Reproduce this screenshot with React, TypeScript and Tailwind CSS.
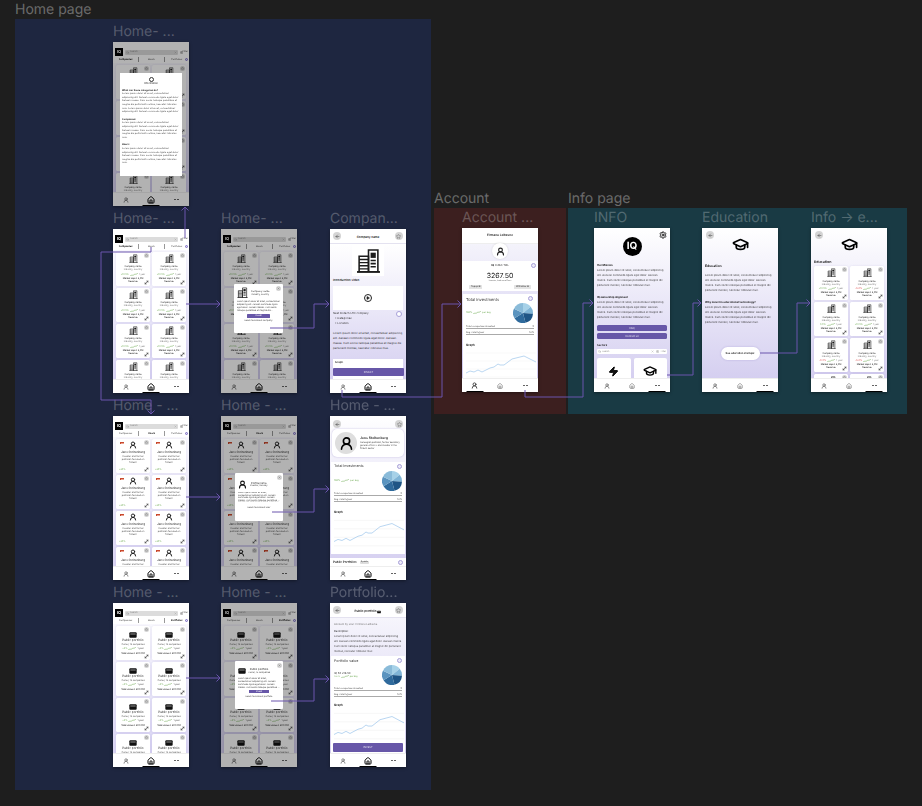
import React from "react";
import { ArrowLeft, GraduationCap, Home, Search, Settings, SlidersHorizontal, Star, UserRound, X, Zap, Play, MoveDiagonal } from "lucide-react";

const lorem = "Lorem ipsum dolor sit amet, consectetuer adipiscing elit. Aenean commodo ligula eget dolor. Aenean massa. Cum sociis natoque penatibus et magnis dis parturient montes, nascetur ridiculus mus.";

function Building({ size }: { size: number }) {
  return (
    <svg width={size} height={size} viewBox="0 0 24 24" fill="none" stroke="#1c1c1c" strokeWidth="1.5" className="shrink-0">
      <path d="M1 23H23" strokeWidth="1.8" />
      <path d="M3 23V8H12V23" />
      <path d="M12 23V2H21V23" />
      <path d="M3 11H12M3 14H12M3 17H12M3 20H12" strokeWidth="1.3" />
      <path d="M14 4.5H19V9.5H14Z" fill="#1c1c1c" stroke="none" />
      <path d="M14 12H19M14 15H19M14 18H19" strokeWidth="1.6" />
    </svg>
  );
}

function WalletIcon({ size }: { size: number }) {
  return (
    <svg width={size} height={size} viewBox="0 0 24 24" className="shrink-0">
      <rect x="1" y="4" width="22" height="16" rx="3" fill="#111" />
      <path d="M4 9H20" stroke="#fff" strokeWidth="1.6" />
    </svg>
  );
}

function Nav({ active }: { active: "user" | "home" | "more" }) {
  const bar = <span className="absolute bottom-0 left-1/2 -translate-x-1/2 w-[17px] h-[1px] bg-black" />;
  return (
    <div className="shrink-0 h-[14px] bg-white grid grid-cols-3 items-center border-t border-[#eeeeee] text-black">
      <div className="relative h-full flex items-center justify-center">
        <UserRound size={active === "user" ? 7 : 6} strokeWidth={active === "user" ? 3 : 2} className="text-[#333]" />
        {active === "user" && bar}
      </div>
      <div className="relative h-full flex items-center justify-center">
        <Home size={active === "home" ? 8 : 6} strokeWidth={active === "home" ? 3 : 2} className={active === "home" ? "text-black" : "text-[#555]"} />
        {active === "home" && bar}
      </div>
      <div className="relative h-full flex items-center justify-center">
        <span className="flex gap-[0.5px]">
          <i className="w-[1px] h-[1px] rounded-full bg-[#333]" />
          <i className="w-[1px] h-[1px] rounded-full bg-[#333]" />
          <i className="w-[1px] h-[1px] rounded-full bg-[#333]" />
          <i className="w-[1px] h-[1px] rounded-full bg-[#333]" />
        </span>
        {active === "more" && bar}
      </div>
    </div>
  );
}

function Round({ children, size = "w-[5px] h-[5px]" }: { children?: React.ReactNode; size?: string }) {
  return <span className={`${size} rounded-full bg-[#d4d4d4] flex items-center justify-center shrink-0`}>{children}</span>;
}

function StarDot() {
  return (
    <span className="absolute right-[1px] top-[1px]">
      <Round><Star size={3} className="text-[#555]" /></Round>
    </span>
  );
}

function Spark() {
  return (
    <svg width="8" height="3" viewBox="0 0 8 3">
      <polyline points="0,3 2,2 3,2.4 5,1 6,1.4 8,0" fill="none" stroke="#6aa84f" strokeWidth="0.5" />
    </svg>
  );
}

function Corner() {
  return (
    <span className="absolute right-[1px] bottom-[1px]">
      <MoveDiagonal size={5} strokeWidth={2.5} className="text-[#222]" />
    </span>
  );
}

function CompanyCard({ change = "+10.5%", red = false }: { change?: string; red?: boolean }) {
  return (
    <div className="relative h-[34px] shrink-0 bg-white rounded-[1.5px] shadow-[0_0_2px_rgba(90,70,170,0.15)] flex flex-col items-center pt-[2px] text-[2.3px] leading-[3px] text-[#444]">
      <StarDot />
      <Building size={9} />
      <span className="mt-[2.5px] text-[#222]">Company name</span>
      <span className="text-[#777]">Industry, country</span>
      <span className="flex items-center gap-[1px] mt-[1.5px]">
        <span className={red ? "text-[#d44]" : "text-[#6aa84f]"}>{change}</span>
        <Spark />
        <span className="text-[#888]">1 year</span>
      </span>
      <span className="mt-[1px] text-black text-center">Market cap € 2,3M</span>
      <span className="text-black">Revenue</span>
      <Corner />
    </div>
  );
}

function UserCard() {
  return (
    <div className="relative h-[34px] shrink-0 bg-white rounded-[1.5px] shadow-[0_0_2px_rgba(90,70,170,0.15)] flex flex-col items-center pt-[2px] text-[2.3px] leading-[3px] text-[#555]">
      <StarDot />
      <span className="absolute left-[4px] top-[3px] w-[4px] h-[2px] border-l border-t border-[#c8492e] bg-[#e9a08f]" />
      <UserRound size={8} strokeWidth={3} className="text-[#222]" />
      <span className="mt-[2px] text-[3px] text-[#222]">Jens Stoltenberg</span>
      <span className="mt-[1px] w-[26px] text-center">Investor and former politician focused on fintech</span>
      <span className="absolute left-[3px] bottom-[2px] text-[#6aa84f]">+20%</span>
      <Corner />
    </div>
  );
}

function PortfolioCard() {
  return (
    <div className="relative h-[34px] shrink-0 bg-white rounded-[1.5px] shadow-[0_0_2px_rgba(90,70,170,0.15)] flex flex-col items-center pt-[5px] text-[2.3px] leading-[3px] text-[#555]">
      <StarDot />
      <WalletIcon size={8} />
      <span className="text-[3px] text-[#222]">Public portfolio</span>
      <span className="mt-[1px]">Owner, 12 companies</span>
      <span className="flex items-center gap-[1px] mt-[1.5px]">
        <span className="text-[#6aa84f]">+5%</span>
        <Spark />
        <span>1 year</span>
      </span>
      <span className="mt-[2px] text-black">Total value € 230.000</span>
      <Corner />
    </div>
  );
}

function ListScreen({ tab, kind }: { tab: 0 | 1 | 2; kind: "company" | "user" | "portfolio" }) {
  const Card = kind === "company" ? CompanyCard : kind === "user" ? UserCard : PortfolioCard;
  const tabs = ["Companies", "Users", "Portfolios"];
  return (
    <>
      <div className="flex-1 min-h-0 overflow-hidden flex flex-col bg-gradient-to-b from-white to-[#d9d4f3]">
        <div className="bg-white shrink-0 pb-[1px]">
          <div className="flex items-center h-[8px] mt-[6px] pl-[2px] pr-[1px] gap-[2px]">
            <div className="w-[8px] h-[8px] bg-black text-white text-[4px] font-bold flex items-center justify-center">IQ</div>
            <div className="flex-1 h-[5px] rounded-[1px] bg-[#dcdcdc] flex items-center justify-between px-[1px] text-[2.3px] text-[#888]">
              <span className="flex items-center gap-[1px]"><Search size={3} />Search</span>
              <X size={3} />
            </div>
            <span className="flex items-center text-[2.3px] text-[#555]"><SlidersHorizontal size={3} />Filter</span>
          </div>
          <div className="relative grid grid-cols-3 h-[5px] mt-[1px] text-[2.5px] leading-[5px] text-center text-[#333]">
            {tabs.map((t, i) => (
              <span key={t} className={`${i === tab ? "font-bold text-black" : ""} ${i > 0 ? "border-l border-[#999]" : ""}`}>{t}</span>
            ))}
            <span className="absolute right-[1px] top-[1px] w-[3px] h-[3px] rounded-full border-[0.5px] border-[#7c6cc4] bg-[#dcd8f2]" />
          </div>
        </div>
        <div className="grid grid-cols-2 gap-[2px] px-[3px] pt-[1.5px]">
          {Array.from({ length: 8 }).map((_, i) => <Card key={i} />)}
        </div>
      </div>
      <Nav active="home" />
    </>
  );
}

function CompanyModal() {
  return (
    <div className="absolute left-[13px] top-[55px] w-[49px] h-[49px] bg-white rounded-[1px] p-[3px] text-[2.2px] leading-[3px] text-[#444] flex flex-col">
      <span className="absolute right-[2px] top-[2px]"><Round><X size={3} /></Round></span>
      <div className="flex items-center gap-[3px]">
        <Building size={11} />
        <div className="text-center"><div className="text-[2.5px] text-[#222]">Company name</div><div>Industry, country</div></div>
      </div>
      <p className="mt-[2px] line-clamp-4">{lorem}</p>
      <div className="mt-[2px] mx-[10px] h-[4px] rounded-[0.5px] bg-[#6757a8] text-white text-center leading-[4px]">Invest</div>
      <div className="mt-[1px] text-center">Read more about company</div>
    </div>
  );
}

function UserModal() {
  return (
    <div className="absolute left-[14px] top-[57px] w-[48px] h-[48px] bg-white rounded-[1px] p-[3px] text-[2.2px] leading-[2.6px] text-[#444] flex flex-col">
      <span className="absolute right-[1px] top-[2px]"><Round><X size={3} /></Round></span>
      <div className="flex items-center gap-[3px] pt-[4px]">
        <UserRound size={9} strokeWidth={3} className="text-[#111] shrink-0" />
        <div className="text-center"><div className="text-[2.6px] text-[#222]">Profile name</div><div>Investor, Norway</div></div>
      </div>
      <p className="mt-[3px] line-clamp-4">{lorem}</p>
      <div className="mt-[5px] text-center">Read more about user</div>
    </div>
  );
}

function PortfolioModal() {
  return (
    <div className="absolute left-[14px] top-[58px] w-[48px] h-[48px] bg-white rounded-[1px] p-[3px] text-[2.2px] leading-[3px] text-[#444] flex flex-col">
      <span className="absolute right-[1px] top-[2px]"><Round><X size={3} /></Round></span>
      <div className="flex items-center gap-[2px] pt-[3px]">
        <WalletIcon size={8} />
        <div className="text-center"><div className="text-[2.6px] text-[#222]">Public portfolio</div><div>Owner, 12 companies</div></div>
      </div>
      <p className="mt-[2px] line-clamp-4">{lorem}</p>
      <div className="mt-[1px] mx-[11px] h-[3px] bg-[#6757a8] text-white text-center leading-[3px]">Invest</div>
      <div className="mt-[1.5px] text-center">Read more about portfolio</div>
    </div>
  );
}

function Dim() {
  return <div className="absolute inset-0 bg-black/30" />;
}

function Pie() {
  const data = [
    [0.14, "#a6d1e8"], [0.12, "#7fb4d6"], [0.2, "#1f5586"], [0.2, "#2f6a9c"], [0.16, "#5b94bf"], [0.18, "#8abbd9"],
  ] as const;
  let a = -Math.PI / 2;
  const paths = data.map(([v, c]) => {
    const b = a + v * Math.PI * 2;
    const d = `M10 10 L${10 + 10 * Math.cos(a)} ${10 + 10 * Math.sin(a)} A10 10 0 ${v > 0.5 ? 1 : 0} 1 ${10 + 10 * Math.cos(b)} ${10 + 10 * Math.sin(b)} Z`;
    a = b;
    return <path key={c} d={d} fill={c} />;
  });
  return <svg width="20" height="20" viewBox="0 0 20 20" className="shrink-0">{paths}</svg>;
}

function Graph({ h = 34 }: { h?: number }) {
  const pts = "0,26 4,24 8,25 12,23 16,25 20,23 24,21 28,20 32,17 34,18 38,18 42,15 46,12 50,11 54,10 58,9 62,11 66,13 70,15";
  return (
    <svg width="70" height={h} viewBox="0 0 70 34" preserveAspectRatio="none" className="block">
      {[6, 14, 22, 30].map((y) => <line key={y} x1="0" x2="70" y1={y} y2={y} stroke="#f0f0f0" strokeWidth="0.5" />)}
      <polyline points={pts} fill="none" stroke="#a9cdee" strokeWidth="0.8" />
    </svg>
  );
}

function StatRows() {
  return (
    <div className="text-[2.4px] leading-[3px] text-[#444]">
      <div className="flex justify-between border-b border-[#aaa] mb-[1.5px]"><span>Total companies invested</span><span>5</span></div>
      <div className="flex justify-between border-b border-[#aaa]"><span>Avg. return/year</span><span>12%</span></div>
    </div>
  );
}

function BackHeader({ title }: { title?: React.ReactNode }) {
  return (
    <div className="shrink-0 h-[15px] bg-white flex items-center justify-between px-[3px] border-b border-[#e4e2f0]">
      <Round size="w-[8px] h-[8px]"><ArrowLeft size={5} className="text-[#222]" /></Round>
      <span className="text-[3px] font-semibold text-[#111] flex items-center gap-[1px] mt-[3px]">{title}</span>
      <Round size="w-[8px] h-[8px]"><Star size={5} className="text-[#555]" /></Round>
    </div>
  );
}

function CompanyDetail() {
  return (
    <>
      <BackHeader title="Company name" />
      <div className="flex-1 min-h-0 relative bg-gradient-to-b from-white to-[#d5cff0] flex flex-col text-[2.8px] leading-[5px] text-[#333] px-[3px]">
        <div className="self-center w-[32px] h-[32px] bg-white flex items-center justify-center">
          <Building size={25} />
        </div>
        <div className="mt-[3px] text-[3px] leading-[3.4px] font-semibold text-[#222]">Introduction video</div>
        <div className="mt-[4px] h-[24px] bg-white flex items-center justify-center">
          <span className="w-[8px] h-[8px] rounded-full border border-[#222] flex items-center justify-center"><Play size={4} fill="#222" className="text-[#222]" /></span>
        </div>
        <div className="mt-[1px] relative">
          <div>Next Fintech LTD company</div>
          <div className="pl-[2px]">• Categories</div>
          <div className="pl-[2px]">• Location</div>
          <span className="absolute right-[1px] top-[0px] w-[6px] h-[6px] rounded-full bg-white border-[0.5px] border-[#a79fd8]" />
        </div>
        <p className="mt-[5px]">Lorem ipsum dolor sit amet, consectetuer adipiscing elit. Aenean commodo ligula eget dolor. Aenean massa. Cum sociis natoque penatibus et magnis dis parturient montes, nascetur ridiculus mus.</p>
        <div className="absolute left-[3px] right-[3px] bottom-0 h-[20px] bg-white px-[2px] pt-[1px] text-[2.8px] leading-[4px] font-semibold">Graph</div>
        <div className="absolute left-[3px] right-[2px] bottom-[3px] h-[8px] rounded-[1px] bg-[#6757a8] text-white/80 text-[2.6px] leading-[8px] text-center">INVEST</div>
      </div>
      <Nav active="home" />
    </>
  );
}

function AccountScreen() {
  return (
    <>
      <div className="shrink-0 h-[16px] bg-white flex items-center justify-center text-[3px] font-semibold text-[#222] border-b border-[#eee]">Firmanu Leibavne</div>
      <div className="flex-1 min-h-0 bg-gradient-to-b from-[#f4f3fb] to-[#cfc9ee] flex flex-col relative">
        <div className="absolute left-1/2 -translate-x-1/2 -top-[1px] w-[16px] h-[16px] rounded-full bg-white shadow-[0_0_2px_rgba(0,0,0,0.15)] flex items-center justify-center z-10">
          <UserRound size={9} strokeWidth={3} className="text-[#222]" />
        </div>
        <div className="relative mt-[17px] h-[30px] shrink-0 bg-white flex flex-col items-center text-[#333]">
          <div className="mt-[2px] text-[2.8px] leading-[4px]"><b>IQ</b> 0.863 TOL</div>
          <span className="absolute right-[2px] top-[2px] w-[5px] h-[5px] rounded-full border-[0.5px] border-[#a79fd8] bg-[#ecebf7]" />
          <div className="mt-[5px] text-[7px] leading-[8px] text-[#111]">3267.50</div>
          <div className="text-[2px] leading-[3px] text-[#555]">Investor, Leibavne Duns</div>
          <div className="mt-[2px] w-full px-[7px] flex justify-between text-[2.3px] leading-[4px]">
            <span className="px-[2px] bg-[#e4e4e4] rounded-[0.5px]">Topup ⊞</span>
            <span className="px-[2px] bg-[#e4e4e4] rounded-[0.5px]">Withdraw ⊟</span>
          </div>
        </div>
        <div className="mt-[3px] flex-1 min-h-0 bg-white mx-[1px] px-[3px] relative overflow-hidden">
          <div className="mt-[3px] text-[4px] leading-[6px] text-[#333]">Total investments</div>
          <span className="absolute right-[4px] top-[2px] w-[5px] h-[5px] rounded-full border-[0.5px] border-[#a79fd8] bg-[#ecebf7]" />
          <div className="flex items-center justify-between pr-[1px]">
            <span className="flex items-center gap-[1px] text-[2.4px] text-[#6aa84f]">100% <Spark /> per day</span>
            <Pie />
          </div>
          <div className="mt-[2px]"><StatRows /></div>
          <div className="mt-[8px] text-[3px] leading-[4px] font-semibold text-[#222]">Graph</div>
          <Graph h={34} />
        </div>
      </div>
      <Nav active="user" />
    </>
  );
}

function UserDetail() {
  return (
    <>
      <div className="flex-1 min-h-0 bg-gradient-to-b from-white to-[#d5cff0] flex flex-col relative">
        <div className="flex justify-between px-[3px] pt-[4px] h-[13px] shrink-0">
          <Round size="w-[8px] h-[8px]"><ArrowLeft size={5} className="text-[#222]" /></Round>
          <Round size="w-[8px] h-[8px]"><Star size={5} className="text-[#555]" /></Round>
        </div>
        <div className="mx-[2px] h-[28px] shrink-0 bg-white rounded-[5px] shadow-[0_0_2px_rgba(90,70,170,0.35)] flex items-center gap-[3px] px-[3px]">
          <span className="w-[22px] h-[22px] rounded-full bg-[#dedede] shrink-0 flex items-center justify-center"><UserRound size={15} strokeWidth={2.6} className="text-black" /></span>
          <div className="text-[2.2px] leading-[3.2px] text-[#444]">
            <div className="text-[3.4px] leading-[5px] font-semibold text-[#111]">Jens Stoltenberg</div>
            <div>Norwegian politician, former secretary general of NATO and investor in the fintech sector</div>
          </div>
        </div>
        <div className="mt-[5px] flex-1 min-h-0 bg-white px-[3px] mx-[1px] relative overflow-hidden">
          <div className="mt-[2px] text-[3.6px] leading-[5px] text-[#333]">Total investments</div>
          <span className="absolute right-[3px] top-[2px] w-[5px] h-[5px] rounded-full border-[0.5px] border-[#a79fd8] bg-[#ecebf7]" />
          <div className="mt-[2px] flex items-center justify-between">
            <span className="flex items-center gap-[1px] text-[2.4px] text-[#6aa84f]">100% <Spark /> per day</span>
            <Pie />
          </div>
          <div className="mt-[1px]"><StatRows /></div>
          <div className="mt-[8px] text-[3px] leading-[4px] font-semibold text-[#222]">Graph</div>
          <Graph h={36} />
        </div>
        <div className="shrink-0 mt-[4px] h-[8px] bg-white flex items-center justify-between px-[3px]">
          <span className="flex items-center gap-[3px] text-[3px] font-semibold text-[#222]">Public Portfolios <span className="px-[1px] bg-[#ddd] rounded-[1px] text-[2px] font-normal">2 public</span></span>
          <span className="w-[5px] h-[5px] rounded-full border-[0.5px] border-[#a79fd8] bg-[#ecebf7]" />
        </div>
      </div>
      <Nav active="home" />
    </>
  );
}

function PortfolioDetail() {
  return (
    <>
      <BackHeader title={<>Public portfolio <WalletIcon size={4} /></>} />
      <div className="flex-1 min-h-0 relative bg-gradient-to-b from-[#f6f5fc] to-[#d5cff0] flex flex-col">
        <div className="px-[4px] pt-[3.5px] h-[38px] shrink-0 text-[2.6px] leading-[5px] text-[#444]">
          <div className="text-[#777]">Account by user: Firmanu Leibavne</div>
          <div className="mt-[2px] text-[#222]">Description:</div>
          <p>Lorem ipsum dolor sit amet, consectetuer adipiscing elit. Aenean commodo ligula eget dolor. Aenean massa. Cum sociis natoque penatibus et magnis dis parturient montes, nascetur ridiculus mus.</p>
        </div>
        <div className="flex-1 min-h-0 bg-white px-[3px] mx-[1px] relative overflow-hidden">
          <div className="mt-[2.5px] text-[3.6px] leading-[5px] text-[#333]">Portfolio value</div>
          <span className="absolute right-[3px] top-[2px] w-[5px] h-[5px] rounded-full border-[0.5px] border-[#a79fd8] bg-[#ecebf7]" />
          <div className="mt-[1.5px] flex items-center justify-between">
            <div className="text-[2.8px] leading-[3px] text-[#444]">IQ 58 216.50<div className="flex items-center gap-[1px] text-[2.2px] text-[#6aa84f]">100% <Spark /> per day</div></div>
            <Pie />
          </div>
          <div className="mt-[2px]"><StatRows /></div>
          <div className="mt-[6px] text-[3px] leading-[4px] font-semibold text-[#222]">Graph</div>
          <Graph h={36} />
        </div>
        <div className="absolute left-[3px] right-[3px] bottom-[1px] h-[9px] rounded-[1px] bg-[#6757a8] text-white/80 text-[2.6px] leading-[9px] text-center">INVEST</div>
      </div>
      <Nav active="home" />
    </>
  );
}

function InfoScreen() {
  return (
    <>
      <div className="flex-1 min-h-0 overflow-hidden relative bg-gradient-to-b from-white to-[#d5cff0] flex flex-col px-[3px] text-[2.7px] leading-[5px] text-[#333]">
        <span className="absolute right-[3px] top-[3px]"><Settings size={8} strokeWidth={3} className="text-[#222]" /></span>
        <div className="self-center mt-[9px] w-[19px] h-[19px] shrink-0 rounded-full bg-black text-white text-[10px] leading-[19px] font-bold text-center">IQ</div>
        <div className="mt-[7px] font-bold text-[#111]">Our Mission</div>
        <p>Lorem ipsum dolor sit amet, consectetuer adipiscing elit. Aenean commodo ligula eget dolor. Aenean massa. Cum sociis natoque penatibus et magnis dis parturient montes, nascetur ridiculus mus.</p>
        <div className="mt-[7px] font-bold text-[#111]">IQ ownership alignment</div>
        <p>Lorem ipsum dolor sit amet, consectetuer adipiscing elit. Aenean commodo ligula eget dolor. Aenean massa. Cum sociis natoque penatibus et magnis dis parturient montes, nascetur ridiculus mus.</p>
        <div className="mt-[5px] h-[6px] shrink-0 rounded-[1.5px] bg-[#6757a8] text-white/80 text-center leading-[6px]">FAQ</div>
        <div className="mt-[2px] h-[6px] shrink-0 rounded-[1.5px] bg-[#6757a8] text-white/80 text-center leading-[6px]">Contact us</div>
        <div className="mt-[4px] font-bold text-[#111]">Sectors</div>
        <div className="mt-[1px] h-[5px] shrink-0 bg-white rounded-[1px] flex items-center justify-between px-[1px] text-[2.2px] text-[#888]">
          <span className="flex items-center gap-[1px]"><Search size={3} />Search</span>
          <span className="flex items-center gap-[2px]"><X size={3} /><SlidersHorizontal size={3} />Filter</span>
        </div>
        <div className="mt-[4px] grid grid-cols-2 gap-[3px]">
          <div className="h-[30px] rounded-[2px] bg-white flex justify-center pt-[8px]"><Zap size={11} fill="#111" className="text-black" /></div>
          <div className="h-[30px] rounded-[2px] bg-white flex justify-center pt-[6px]"><GraduationCap size={14} strokeWidth={2.4} className="text-black" /></div>
        </div>
      </div>
      <Nav active="more" />
    </>
  );
}

function EducationScreen() {
  return (
    <>
      <div className="flex-1 min-h-0 relative bg-gradient-to-b from-white to-[#d5cff0] flex flex-col px-[3px] text-[2.7px] leading-[5px] text-[#333]">
        <span className="absolute left-[4px] top-[3px]"><Round size="w-[8px] h-[8px]"><ArrowLeft size={5} className="text-[#222]" /></Round></span>
        <div className="self-center mt-[8px]"><GraduationCap size={17} strokeWidth={2.4} className="text-black" /></div>
        <div className="mt-[10.5px] text-[3.4px] leading-[5px] font-bold text-[#111]">Education</div>
        <p className="mt-[4px]">Lorem ipsum dolor sit amet, consectetuer adipiscing elit. Aenean commodo ligula eget dolor. Aenean massa. Cum sociis natoque penatibus et magnis dis parturient montes, nascetur ridiculus mus.</p>
        <div className="mt-[7px] font-bold text-[#111]">Why invest in educational technology?</div>
        <p>Lorem ipsum dolor sit amet, consectetuer adipiscing elit. Aenean commodo ligula eget dolor. Aenean massa. Cum sociis natoque penatibus et magnis dis parturient montes, nascetur ridiculus mus.</p>
        <div className="self-center mt-[22px] h-[13px] w-[39px] rounded-full bg-white shadow-[0_0_2px_rgba(90,70,170,0.3)] flex items-center justify-center font-semibold text-[2.6px] text-[#222]">See education startups</div>
      </div>
      <Nav active="more" />
    </>
  );
}

function InfoEducation() {
  const changes = ["+10.5%", "-12.1%", "0.0%", "+10.5%", "-18.1%", "-12.1%", "+10.5%", "+10.5%"];
  return (
    <>
      <div className="flex-1 min-h-0 overflow-hidden relative bg-gradient-to-b from-white to-[#d5cff0] flex flex-col">
        <span className="absolute left-[4px] top-[3px]"><Round size="w-[8px] h-[8px]"><ArrowLeft size={5} className="text-[#222]" /></Round></span>
        <div className="self-center mt-[8px] shrink-0"><GraduationCap size={17} strokeWidth={2.4} className="text-black" /></div>
        <div className="mt-[7px] ml-[3px] shrink-0 text-[3.6px] leading-[5px] font-semibold text-[#111]">Education</div>
        <div className="grid grid-cols-2 gap-[2px] px-[3px] pt-[1px]">
          {changes.map((c, i) => <CompanyCard key={i} change={c} red={c.startsWith("-")} />)}
        </div>
      </div>
      <Nav active="more" />
    </>
  );
}

function TopInfo() {
  return (
    <div className="absolute left-[7px] top-[31px] w-[62px] h-[103px] bg-white px-[2px] pt-[4px] overflow-hidden text-[2.4px] leading-[3.6px] text-[#444]">
      <div className="flex flex-col items-center">
        <span className="w-[5px] h-[5px] rounded-full border-[0.5px] border-[#333]" />
        <span className="text-[#222] text-[2.6px]">Information</span>
      </div>
      <div className="mt-[3px] font-bold text-[#111]">What can these categories do?</div>
      <p>{lorem} {lorem.slice(0, 90)}</p>
      <div className="mt-[4px] font-bold text-[#111]">Companies:</div>
      <p>{lorem}</p>
      <div className="mt-[4px] font-bold text-[#111]">Users:</div>
      <p>{lorem}</p>
    </div>
  );
}

function Phone({ pos, title, children }: { pos: string; title: string; children: React.ReactNode }) {
  return (
    <div className={`absolute ${pos} flex flex-col w-[76px]`}>
      <div className="h-[17px] -translate-y-[2px] text-[14px] leading-[17px] whitespace-nowrap text-white/25">{title}</div>
      <div className="relative w-[76px] h-[164px] overflow-hidden bg-white flex flex-col shadow-[0_1px_3px_rgba(0,0,0,0.4)] blur-[0.25px]">
        {children}
      </div>
    </div>
  );
}

function Connectors() {
  const paths = [
    "M185 238V207", "M181.5 210.5L185 207L188.5 210.5",
    "M151 247V252H101V400H151V414", "M147.5 410.5L151 414L154.5 410.5",
    "M186 304H220", "M216.5 300.5L220 304L216.5 307.5",
    "M270 328H314V304H329", "M325.5 300.5L329 304L325.5 307.5",
    "M342 390V397H442V304H461", "M457.5 300.5L461 304L457.5 307.5",
    "M525 390V397H583V303H593", "M589.5 299.5L593 303L589.5 306.5",
    "M667 375H693V303H701", "M697.5 299.5L701 303L697.5 306.5",
    "M760 353H797V303H810", "M806.5 299.5L810 303L806.5 306.5",
    "M186 497H220", "M216.5 493.5L220 497L216.5 500.5",
    "M272 512H314V489H329", "M325.5 485.5L329 489L325.5 492.5",
    "M186 678H220", "M216.5 674.5L220 678L216.5 681.5",
    "M271 701H314V679H329", "M325.5 675.5L329 679L325.5 682.5",
  ];
  return (
    <svg className="absolute left-0 top-0 pointer-events-none" width="922" height="806" viewBox="0 0 922 806" fill="none" stroke="#6a54ad" strokeWidth="1">
      {paths.map((d) => <path key={d} d={d} />)}
    </svg>
  );
}

export default function App() {
  return (
    <div className="relative w-[922px] h-[806px] overflow-hidden bg-[#1e1e1e] font-['Inter',sans-serif] [text-rendering:geometricPrecision]">
      <div className="absolute left-[15px] top-[1px] text-[14px] leading-[17px] text-white/35">Home page</div>
      <div className="absolute left-[434px] top-[190px] text-[14px] leading-[17px] text-white/35">Account</div>
      <div className="absolute left-[568px] top-[190px] text-[14px] leading-[17px] text-white/35">Info page</div>
      <div className="absolute left-[15px] top-[19px] w-[416px] h-[771px] bg-[#1e2640]" />
      <div className="absolute left-[434px] top-[208px] w-[132px] h-[206px] bg-[#3c1f1f]" />
      <div className="absolute left-[568px] top-[208px] w-[339px] h-[206px] bg-[#193a44]" />

      <Phone pos="left-[113px] top-[25px]" title="Home- ...">
        <ListScreen tab={0} kind="company" />
        <Dim />
        <TopInfo />
      </Phone>
      <Phone pos="left-[113px] top-[212px]" title="Home- ...">
        <ListScreen tab={0} kind="company" />
      </Phone>
      <Phone pos="left-[221px] top-[212px]" title="Home- ...">
        <ListScreen tab={0} kind="company" />
        <Dim />
        <CompanyModal />
      </Phone>
      <Phone pos="left-[330px] top-[212px]" title="Compan...">
        <CompanyDetail />
      </Phone>

      <Phone pos="left-[113px] top-[399px]" title="Home - ...">
        <ListScreen tab={1} kind="user" />
      </Phone>
      <Phone pos="left-[221px] top-[399px]" title="Home - ...">
        <ListScreen tab={1} kind="user" />
        <Dim />
        <UserModal />
      </Phone>
      <Phone pos="left-[330px] top-[399px]" title="Home - ...">
        <UserDetail />
      </Phone>

      <Phone pos="left-[113px] top-[586px]" title="Home - ...">
        <ListScreen tab={2} kind="portfolio" />
      </Phone>
      <Phone pos="left-[221px] top-[586px]" title="Home - ...">
        <ListScreen tab={2} kind="portfolio" />
        <Dim />
        <PortfolioModal />
      </Phone>
      <Phone pos="left-[330px] top-[586px]" title="Portfolio...">
        <PortfolioDetail />
      </Phone>

      <Phone pos="left-[462px] top-[211px]" title="Account ...">
        <AccountScreen />
      </Phone>
      <Phone pos="left-[594px] top-[211px]" title="INFO">
        <InfoScreen />
      </Phone>
      <Phone pos="left-[702px] top-[211px]" title="Education">
        <EducationScreen />
      </Phone>
      <Phone pos="left-[811px] top-[211px]" title="Info → e...">
        <InfoEducation />
      </Phone>

      <Connectors />
    </div>
  );
}
